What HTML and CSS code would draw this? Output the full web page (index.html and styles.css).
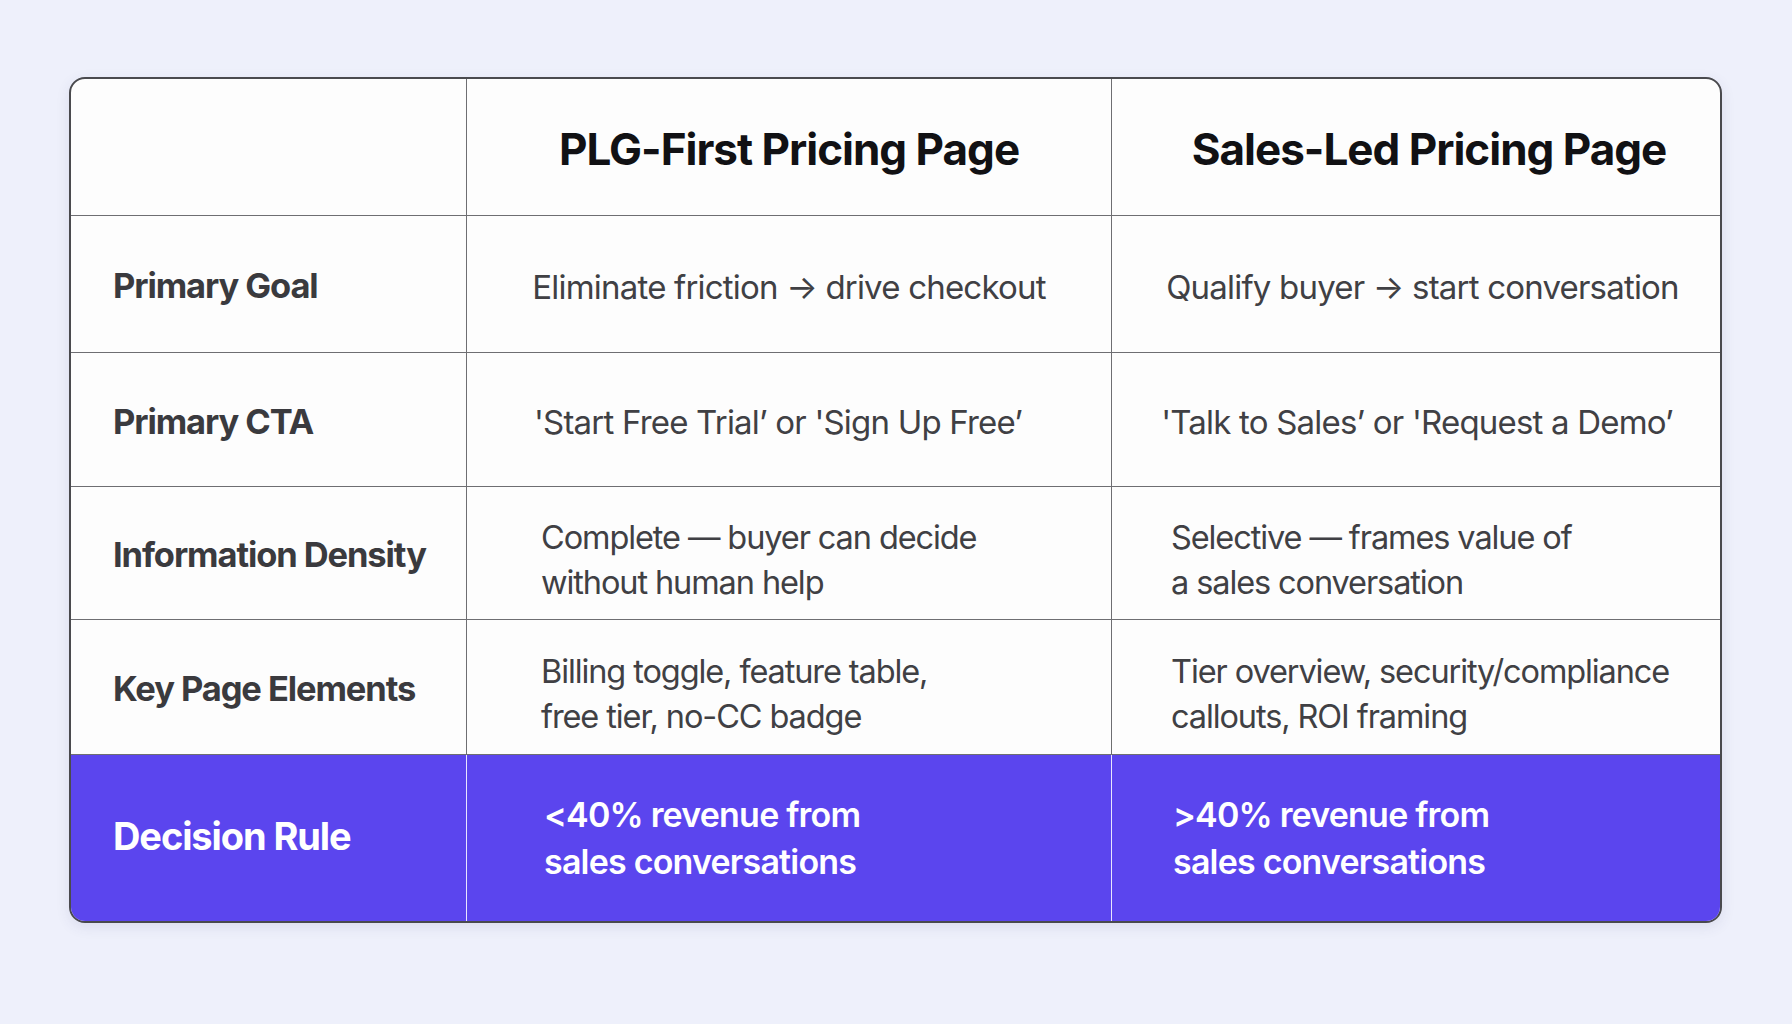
FILE: index.html
```html
<!DOCTYPE html>
<html lang="en">
<head>
<meta charset="utf-8">
<title>PLG vs Sales-Led Pricing Page</title>
<link rel="stylesheet" href="styles.css">
</head>
<body>
<main class="page">
  <div class="table">
    <div class="cell head blank"></div>
    <div class="cell head center">PLG-First Pricing Page</div>
    <div class="cell head center h3 last">Sales-Led Pricing Page</div>

    <div class="cell label">Primary Goal</div>
    <div class="cell body center">Eliminate friction → drive checkout</div>
    <div class="cell body center b3 last">Qualify buyer → start conversation</div>

    <div class="cell label">Primary CTA</div>
    <div class="cell body center b2">'Start Free Trial’ or 'Sign Up Free’</div>
    <div class="cell body center last">'Talk to Sales’ or 'Request a Demo’</div>

    <div class="cell label">Information Density</div>
    <div class="cell body left c2">Complete — buyer can decide<br>without human help</div>
    <div class="cell body left c3 last">Selective — frames value of<br>a sales conversation</div>

    <div class="cell label">Key Page Elements</div>
    <div class="cell body left c2">Billing toggle, feature table,<br>free tier, no-CC badge</div>
    <div class="cell body left c3 last">Tier overview, security/compliance<br>callouts, ROI framing</div>

    <div class="cell label rule rulelabel">Decision Rule</div>
    <div class="cell rule ruletext c2">&lt;40% revenue from<br>sales conversations</div>
    <div class="cell rule ruletext c3 last">&gt;40% revenue from<br>sales conversations</div>
  </div>
</main>
</body>
</html>
```

FILE: styles.css
```css
html, body {
  margin: 0;
  padding: 0;
}
body {
  background: #eef0fb;
  font-family: Inter, "Noto Sans", sans-serif;
  width: 1792px;
  height: 1024px;
  overflow: hidden;
}
.page {
  padding: 77px 0 0 69px;
}
.table {
  display: grid;
  grid-template-columns: 396px 645px 610px;
  grid-template-rows: 137px 137px 134px 133px 135px 166px;
  width: 1653px;
  box-sizing: border-box;
  border: 2px solid #4a4a4e;
  border-radius: 16px;
  overflow: hidden;
  background: #fdfdfd;
  box-shadow: 0 4px 14px rgba(60, 60, 120, 0.10);
}
.cell {
  box-sizing: border-box;
  border-right: 1.5px solid #6e6e72;
  border-bottom: 1.5px solid #6e6e72;
  display: flex;
  align-items: center;
  color: #3c3c40;
}
.cell.last {
  border-right: none;
}
.head {
  font-weight: 700;
  font-size: 44px;
  color: #111114;
  letter-spacing: -1px;
  padding-top: 4px;
}
.head.h3 {
  padding-left: 24px;
}
.center {
  justify-content: center;
  text-align: center;
}
.label {
  font-weight: 700;
  font-size: 34.5px;
  letter-spacing: -1.1px;
  padding-left: 42px;
  padding-top: 3px;
  color: #3a3a3e;
}
.body {
  font-size: 33px;
  font-weight: 400;
  letter-spacing: -0.8px;
  line-height: 45px;
  color: #404044;
  padding-top: 6px;
}
.body.b2 {
  padding-right: 22px;
}
.body.b3 {
  padding-left: 11px;
}
.body.left {
  text-align: left;
  font-size: 32.5px;
  letter-spacing: -1.1px;
  padding-top: 13px;
}
.c2 {
  padding-left: 74px;
}
.c3 {
  padding-left: 59px;
}
.rule {
  background: #5b45ee;
  color: #ffffff;
  border-bottom: none;
  border-right-color: #e8e6ff;
}
.rulelabel {
  font-size: 38px;
  padding-top: 0;
  padding-bottom: 4px;
  letter-spacing: -1.1px;
}
.ruletext {
  font-weight: 600;
  font-size: 34px;
  letter-spacing: -0.8px;
  line-height: 47px;
}
.ruletext.c2 {
  padding-left: 77px;
}
.ruletext.c3 {
  padding-left: 61px;
}
```
